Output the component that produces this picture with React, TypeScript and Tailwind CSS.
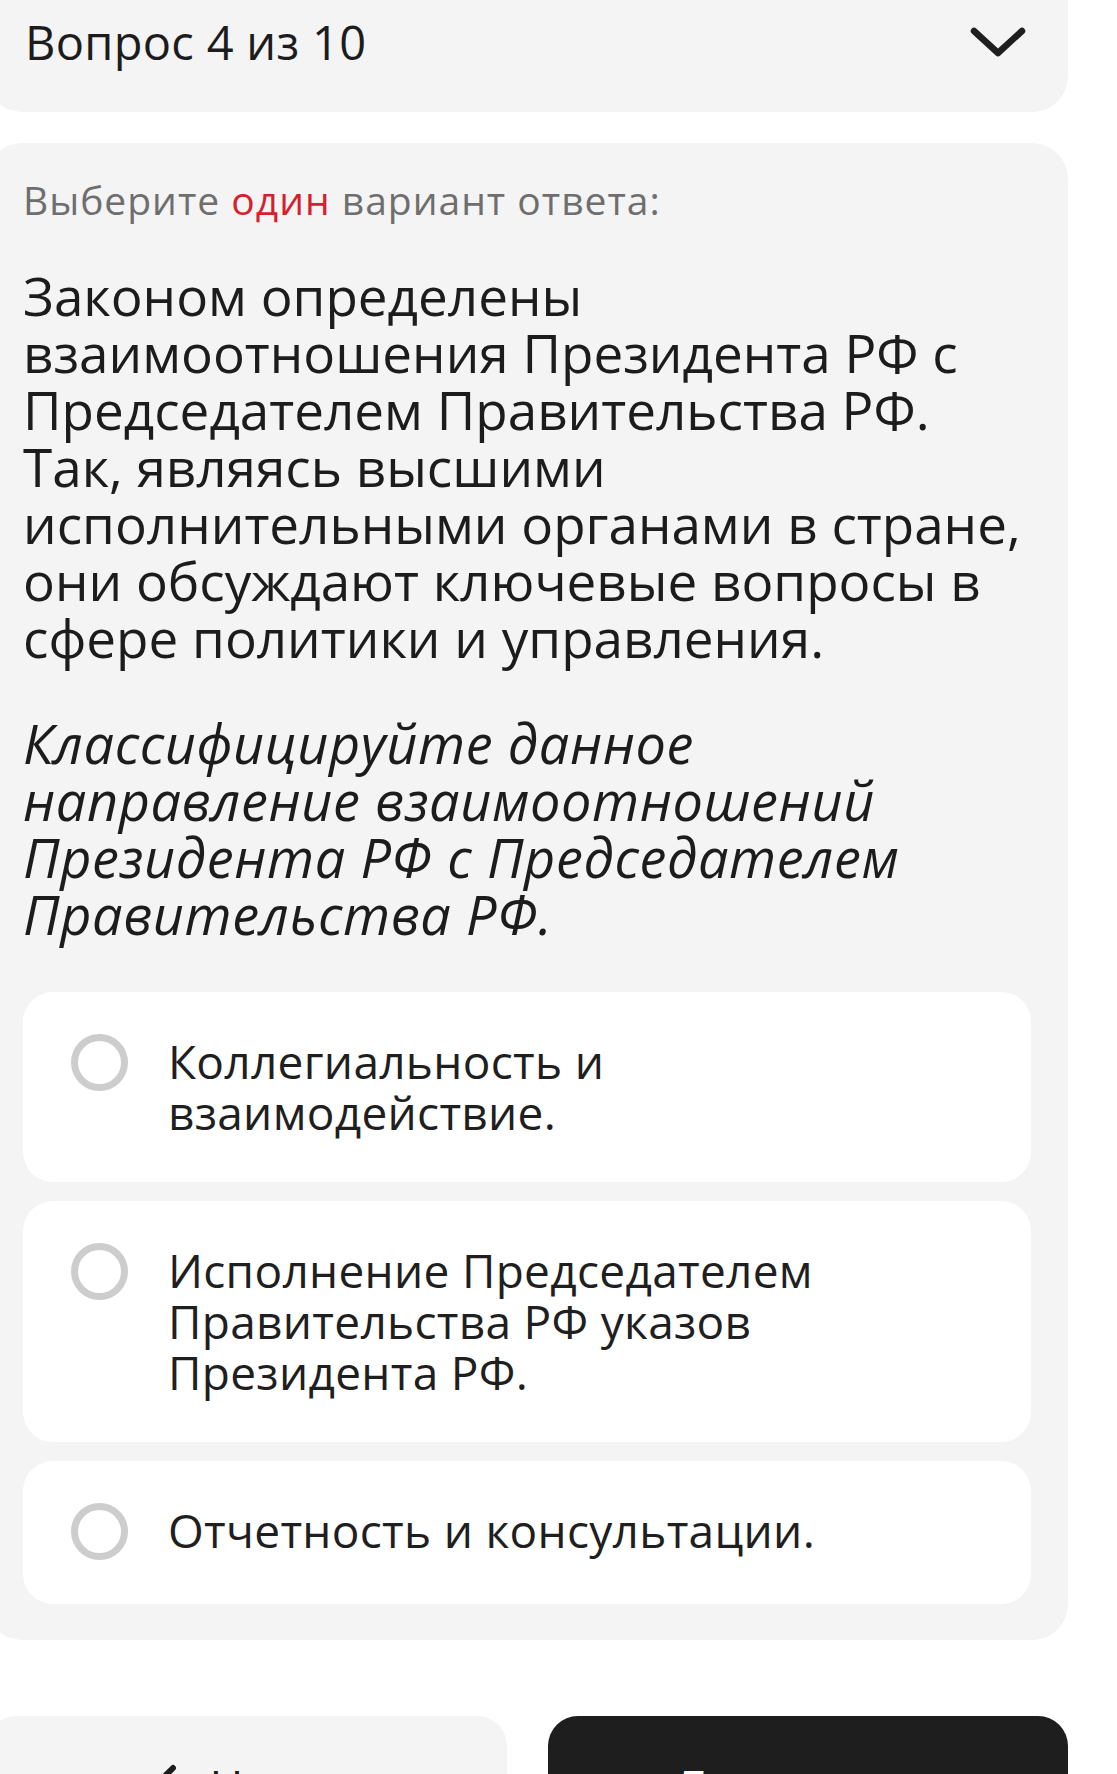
import React from "react";

const Chevron = () => (
  <svg width="56" height="30" viewBox="0 0 56 30" fill="none" className="flex-none">
    <polyline points="4,4 28,26 52,4" stroke="#1f1f1f" strokeWidth="6.5" strokeLinecap="round" strokeLinejoin="round" />
  </svg>
);

const Radio = () => (
  <div className="mt-[-2px] h-[57px] w-[57px] flex-none rounded-full border-[7px] border-[#cdcdcd] bg-white" />
);

const Option = ({ lines }: { lines: string[] }) => (
  <div className="flex items-start gap-[40px] rounded-[30px] bg-white py-[44px] pl-[48px] pr-[30px]">
    <Radio />
    <div className="whitespace-nowrap text-[46px] leading-[51px] tracking-[0.3px] text-[#1f1f1f]">
      {lines.map((l, i) => (
        <div key={i}>{l}</div>
      ))}
    </div>
  </div>
);

export default function App() {
  const question = [
    "Законом определены",
    "взаимоотношения Президента РФ с",
    "Председателем Правительства РФ.",
    "Так, являясь высшими",
    "исполнительными органами в стране,",
    "они обсуждают ключевые вопросы в",
    "сфере политики и управления.",
  ];
  const task = [
    "Классифицируйте данное",
    "направление взаимоотношений",
    "Президента РФ с Председателем",
    "Правительства РФ.",
  ];
  return (
    <div className="h-[1774px] w-[1117px] overflow-hidden bg-white font-['Open_Sans',sans-serif] text-[#1c1c1c]">
      <div className="ml-[-14px] w-[1082px]">
        <div className="mt-[-40px] flex items-center justify-between rounded-[36px] bg-[#f4f4f4] pb-[42px] pl-[39px] pr-[42px] pt-[54px]">
          <div className="text-[47px] leading-[56px] tracking-[0.3px] text-[#1c1c1c]">Вопрос 4 из 10</div>
          <Chevron />
        </div>

        <div className="mt-[31px] rounded-[36px] bg-[#f4f4f4] px-[37px] pb-[36px] pt-[35px]">
          <div className="text-[39px] leading-[44px] tracking-[1px] text-[#6e6e6e]">
            Выберите <span className="text-[#d71f2d]">один</span> вариант ответа:
          </div>
          <div className="mt-[45px] whitespace-nowrap text-[53px] leading-[57px] text-[#1c1c1c]">
            {question.map((l, i) => (
              <div key={i}>{l}</div>
            ))}
          </div>
          <div className="mt-[49px] whitespace-nowrap text-[54px] font-medium italic leading-[57px] tracking-[0.6px] text-[#1c1c1c]">
            {task.map((l, i) => (
              <div key={i}>{l}</div>
            ))}
          </div>
          <div className="mt-[49px] flex flex-col gap-[19px]">
            <Option lines={["Коллегиальность и", "взаимодействие."]} />
            <Option lines={["Исполнение Председателем", "Правительства РФ указов", "Президента РФ."]} />
            <Option lines={["Отчетность и консультации."]} />
          </div>
        </div>

        <div className="mt-[76px] grid grid-cols-2 gap-[41px]">
          <div className="flex h-[140px] items-center justify-center gap-[30px] rounded-[30px] bg-[#f4f4f4] text-[46px] text-[#1c1c1c]">
            <svg width="30" height="44" viewBox="0 0 30 44" fill="none" className="flex-none">
              <polyline points="24,4 6,22 24,40" stroke="#1c1c1c" strokeWidth="6" strokeLinecap="round" strokeLinejoin="round" />
            </svg>
            <span>Назад</span>
          </div>
          <div className="flex h-[140px] items-center justify-center rounded-[30px] bg-[#1e1e1e] pr-[76px] text-[46px] font-bold text-white">
            <span>Дальше</span>
          </div>
        </div>
      </div>
    </div>
  );
}
